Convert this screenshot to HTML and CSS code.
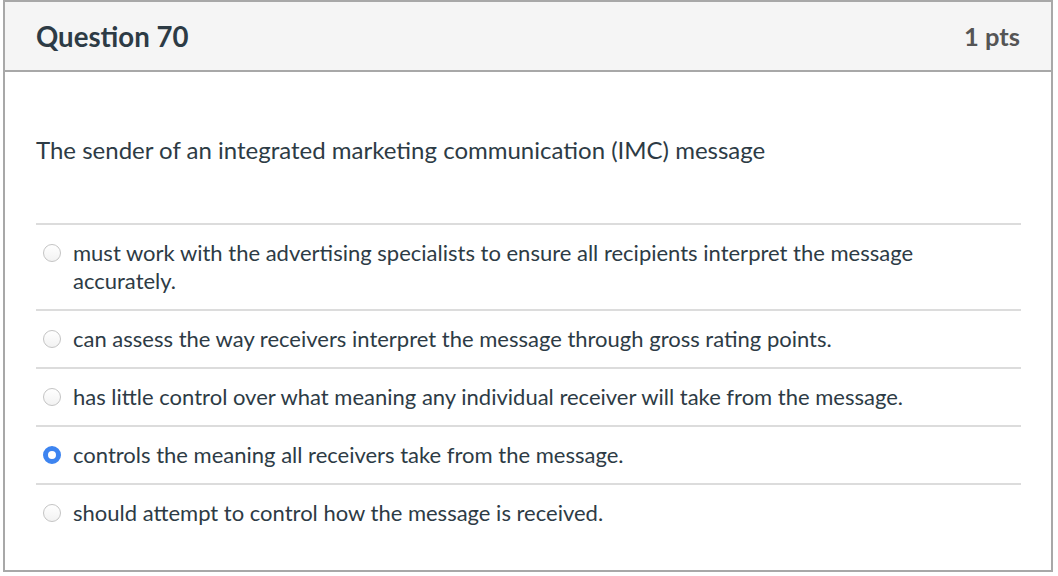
FILE: index.html
```html
<!DOCTYPE html>
<html lang="en">
<head>
<meta charset="utf-8">
<title>Question 70</title>
<link rel="stylesheet" href="styles.css">
</head>
<body>
<div class="question">
  <div class="q-header">
    <h2 class="q-title">Question 70</h2>
    <span class="q-pts">1 pts</span>
  </div>
  <div class="q-body">
    <p class="q-text">The sender of an integrated marketing communication (IMC) message</p>
    <ul class="answers">
      <li class="answer"><span class="radio"></span><span class="label">must work with the advertising specialists to ensure all recipients interpret the message accurately.</span></li>
      <li class="answer"><span class="radio"></span><span class="label">can assess the way receivers interpret the message through gross rating points.</span></li>
      <li class="answer"><span class="radio"></span><span class="label">has little control over what meaning any individual receiver will take from the message.</span></li>
      <li class="answer"><span class="radio checked"></span><span class="label">controls the meaning all receivers take from the message.</span></li>
      <li class="answer"><span class="radio"></span><span class="label">should attempt to control how the message is received.</span></li>
    </ul>
  </div>
</div>
</body>
</html>
```
FILE: styles.css
```css
html, body {
  margin: 0;
  padding: 0;
  background: #fff;
}
body {
  padding: 0 5px 0 3px;
  font-family: Lato, "Noto Sans", sans-serif;
  color: #2d3b45;
}
.question {
  border: 2px solid #a8a8a8;
  height: 572px;
  box-sizing: border-box;
}
.q-header {
  height: 68px;
  background: #f5f5f5;
  border-bottom: 2px solid #a8a8a8;
  display: flex;
  align-items: center;
  justify-content: space-between;
  padding: 0 31px;
}
.q-title {
  margin: 0;
  font-size: 27.6px;
  font-weight: 700;
  color: #2d3b45;
}
.q-pts {
  font-size: 25.5px;
  font-weight: 700;
  color: #555;
}
.q-body {
  padding: 0 30px 0 31px;
}
.q-text {
  margin: 0;
  padding-top: 63px;
  padding-bottom: 58px;
  font-size: 24px;
  line-height: 30px;
}
.answers {
  list-style: none;
  margin: 0;
  padding: 0;
}
.answer {
  border-top: 2px solid #dcdcdc;
  padding: 14px 0;
  display: flex;
  align-items: flex-start;
  font-size: 22px;
  line-height: 28px;
}
.radio {
  flex: none;
  width: 18px;
  height: 18px;
  box-sizing: border-box;
  border: 1px solid #c4c4c4;
  border-radius: 50%;
  margin: 5px 12px 0 7px;
  background: linear-gradient(#fff, #f2f2f2);
}
.radio.checked {
  border: 5px solid #3d84f0;
  background: #fff;
}
.label {
  flex: 1;
  padding-right: 100px;
}
```
